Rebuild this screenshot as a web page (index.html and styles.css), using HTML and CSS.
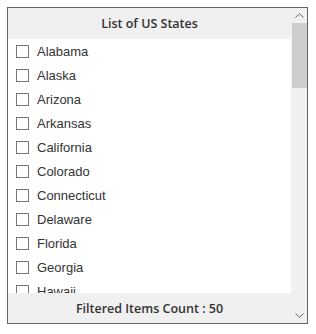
FILE: index.html
```html
<!DOCTYPE html>
<html lang="en">
  <head>
    <meta charset="UTF-8" />
    <title>List of US States</title>
    <link rel="stylesheet" href="styles.css">
  </head>
  <body>
    <div class="listbox">
      <div class="main">
        <div class="header">List of US States</div>
        <ul class="items">
          <li><span class="check"></span>Alabama</li>
          <li><span class="check"></span>Alaska</li>
          <li><span class="check"></span>Arizona</li>
          <li><span class="check"></span>Arkansas</li>
          <li><span class="check"></span>California</li>
          <li><span class="check"></span>Colorado</li>
          <li><span class="check"></span>Connecticut</li>
          <li><span class="check"></span>Delaware</li>
          <li><span class="check"></span>Florida</li>
          <li><span class="check"></span>Georgia</li>
          <li><span class="check"></span>Hawaii</li>
        </ul>
        <div class="footer">Filtered Items Count : 50</div>
      </div>
      <div class="scrollbar">
        <div class="arrow">
          <svg width="9" height="5" viewBox="0 0 9 5"><path d="M0.5 4.5 L4.5 0.8 L8.5 4.5" fill="none" stroke="#606060" stroke-width="1"/></svg>
        </div>
        <div class="track">
          <div class="thumb"></div>
        </div>
        <div class="arrow">
          <svg width="9" height="5" viewBox="0 0 9 5"><path d="M0.5 0.5 L4.5 4.2 L8.5 0.5" fill="none" stroke="#606060" stroke-width="1"/></svg>
        </div>
      </div>
    </div>
  </body>
</html>
```

FILE: styles.css
```css
body {
  margin: 7px;
  background: #ffffff;
}

.listbox {
  width: 299px;
  height: 315px;
  border: 1px solid #646464;
  display: flex;
  background: #f0f0f0;
}

.main {
  width: 283px;
  display: flex;
  flex-direction: column;
}

.header,
.footer {
  height: 31px;
  flex: none;
  display: flex;
  align-items: center;
  justify-content: center;
  font-family: "Open Sans", sans-serif;
  font-size: 12.5px;
  font-weight: 600;
  color: #333333;
  background: #f0f0f0;
}

.footer {
  height: 30px;
}

.items {
  flex: 1;
  margin: 0;
  padding: 0;
  list-style: none;
  background: #ffffff;
  overflow: hidden;
}

.items li {
  height: 24px;
  display: flex;
  align-items: center;
  padding-left: 8px;
  font-family: "Liberation Sans", Arial, sans-serif;
  font-size: 13px;
  color: #333333;
}

.check {
  width: 11px;
  height: 11px;
  border: 1px solid #767676;
  margin-right: 8px;
  flex: none;
}

.scrollbar {
  width: 16px;
  display: flex;
  flex-direction: column;
  background: #f0f0f0;
}

.arrow {
  height: 15px;
  display: flex;
  align-items: center;
  justify-content: center;
  flex: none;
}

.track {
  flex: 1;
}

.thumb {
  margin-left: 1px;
  width: 15px;
  height: 65px;
  background: #cdcdcd;
}
```
